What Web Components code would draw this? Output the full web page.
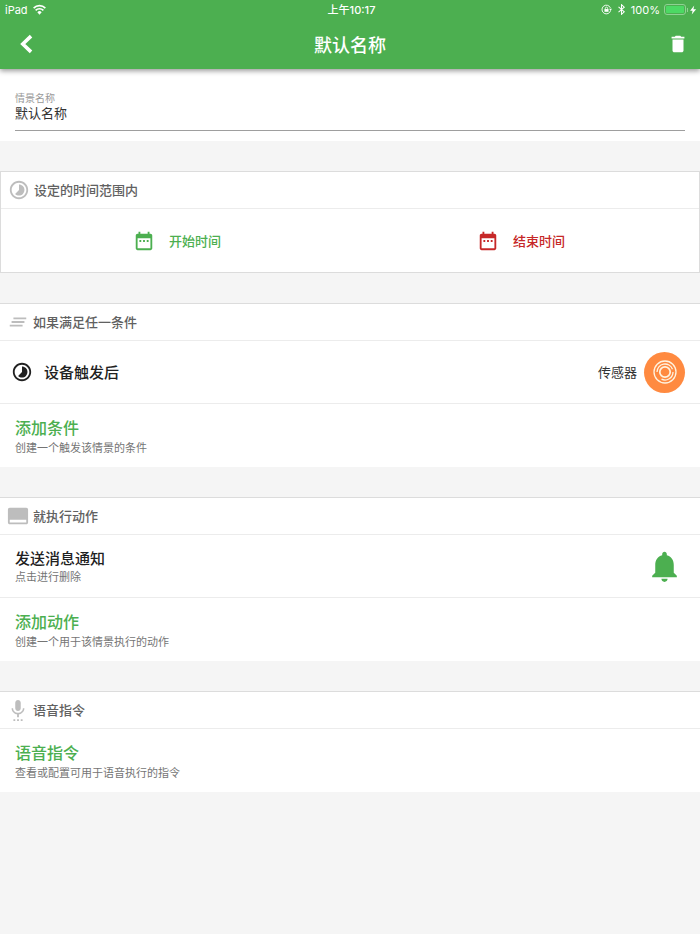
<!DOCTYPE html>
<html lang="zh-CN">
<head>
<meta charset="utf-8">
<meta name="viewport" content="width=device-width, initial-scale=1">
<title>默认名称</title>
<style>
  html { background: #f5f5f5; }
  body {
    margin: 0;
    font-family: "Noto Sans CJK SC", sans-serif;
    font-size: 13px;
    line-height: 20px;
    color: #212121;
    --green: #4caf50;
    --red: #c62828;
    --line: #ececec;
    --edge: #dcdcdc;
    --muted: #bdbdbd;
  }
</style>
</head>
<body>
<scene-page>
  <app-header slot="header" heading="默认名称" time="上午10:17"></app-header>
  <name-field label="情景名称" value="默认名称"></name-field>

  <scene-section icon="timelapse" heading="设定的时间范围内" framed>
    <time-range>
      <time-button>开始时间</time-button>
      <time-button class="end">结束时间</time-button>
    </time-range>
  </scene-section>

  <scene-section icon="lines" heading="如果满足任一条件">
    <device-row heading="设备触发后" device="传感器"></device-row>
    <action-row accent note="创建一个触发该情景的条件">添加条件</action-row>
  </scene-section>

  <scene-section icon="panel" heading="就执行动作">
    <action-row note="点击进行删除">发送消息通知<app-icon slot="end" name="bell"></app-icon></action-row>
    <action-row accent note="创建一个用于该情景执行的动作">添加动作</action-row>
  </scene-section>

  <scene-section icon="voice" heading="语音指令">
    <action-row accent note="查看或配置可用于语音执行的指令">语音指令</action-row>
  </scene-section>
</scene-page>

<script>
const ICONS = {
  timelapse: '<path d="M16.24 7.76C15.07 6.59 13.54 6 12 6v6l-4.24 4.24c2.34 2.34 6.14 2.34 8.49 0 2.34-2.34 2.34-6.14-.01-8.48zM12 2C6.48 2 2 6.48 2 12s4.48 10 10 10 10-4.48 10-10S17.52 2 12 2zm0 18c-4.42 0-8-3.58-8-8s3.58-8 8-8 8 3.58 8 8-3.58 8-8 8z"/>',
  lines: '<path d="M5 13h14v-2H5v2zm-2 4h14v-2H3v2zM7 7v2h14V7H7z"/>',
  panel: '<path d="M21 3H3c-1.1 0-2 .9-2 2v14c0 1.1.9 2 2 2h18c1.1 0 2-.9 2-2V5c0-1.1-.9-2-2-2zm0 16H3v-3h18v3z"/>',
  voice: '<path d="M7 24h2v-2H7v2zm5-11c1.66 0 2.99-1.34 2.99-3L15 4c0-1.66-1.34-3-3-3S9 2.34 9 4v6c0 1.66 1.34 3 3 3zm-1 11h2v-2h-2v2zm4 0h2v-2h-2v2zm4-14h-1.7c0 3-2.54 5.1-5.3 5.1S6.7 13 6.7 10H5c0 3.41 2.72 6.23 6 6.72V20h2v-3.28c3.28-.49 6-3.31 6-6.72z"/>',
  calendar: '<path d="M9 11H7v2h2v-2zm4 0h-2v2h2v-2zm4 0h-2v2h2v-2zm2-7h-1V2h-2v2H8V2H6v2H5c-1.11 0-1.99.9-1.99 2L3 20c0 1.1.89 2 2 2h14c1.1 0 2-.9 2-2V6c0-1.1-.9-2-2-2zm0 16H5V9h14v11z"/>',
  bell: '<path d="M12 22c1.1 0 2-.9 2-2h-4c0 1.1.89 2 2 2zm6-6v-5c0-3.07-1.64-5.64-4.5-6.32V4c0-.83-.67-1.5-1.5-1.5s-1.5.67-1.5 1.5v.68C7.63 5.36 6 7.92 6 11v5l-2 2v1h16v-1l-2-2z"/>',
  trash: '<path d="M6 19c0 1.1.9 2 2 2h8c1.1 0 2-.9 2-2V7H6v12zM19 4h-3.5l-1-1h-5l-1 1H5v2h14V4z"/>',
  back: '<path d="M17.500 3.400 8.500 12l9 8.600" fill="none" stroke="currentColor" stroke-width="3.900"/>',
  wifi: '<path d="M12 21.5 16 17a5.6 5.6 0 0 0-8 0z"/><path d="M4.8 13.6a10.2 10.2 0 0 1 14.4 0M1.2 9.4a15.3 15.3 0 0 1 21.6 0" fill="none" stroke="currentColor" stroke-width="3"/>',
  lock: '<path d="M20.5 8.5A9.5 9.5 0 1 0 21 14" fill="none" stroke="currentColor" stroke-width="2"/><path d="M17.5 10.5H24l-3 4z"/><path d="M7.5 11h9v6h-9z"/><path d="M9.5 11V9.3a2.5 2.5 0 0 1 5 0V11" fill="none" stroke="currentColor" stroke-width="1.8"/>',
  bluetooth: '<path d="M5.5 6.5 18 17l-6 5.5v-21L18 7 5.5 17.5" fill="none" stroke="currentColor" stroke-width="2.2"/>',
  bolt: '<path d="M15 1 5 13.5h6L9 23l10.5-13H13z"/>',
  sensor: '<g fill="none" stroke="currentColor" stroke-width="1.3"><circle cx="12" cy="12" r="11"/><path d="M4 12a8 8 0 0 1 15.5-2.8M20 12a8 8 0 0 1-11.5 7.2"/><circle cx="12" cy="12" r="5.2" stroke-width="1.7"/></g>'
};

function define(name, html, setup) {
  const template = document.createElement('template');
  template.innerHTML = '<style>*{box-sizing:border-box}button{font:inherit;color:inherit;background:none;border:0;margin:0;padding:0;text-align:left;cursor:pointer}</style>' + html;
  customElements.define(name, class extends HTMLElement {
    constructor() {
      super();
      this.attachShadow({ mode: 'open' }).append(template.content.cloneNode(true));
    }
    connectedCallback() {
      this.shadowRoot.querySelectorAll('[data-text]').forEach(el => {
        el.textContent = this.getAttribute(el.dataset.text);
      });
      if (setup) setup(this, this.shadowRoot);
    }
  });
}

define('app-icon', `
  <style>
    :host { display: block; flex: none; width: 22px; height: 22px; }
    svg { display: block; width: 100%; height: 100%; fill: currentColor; }
  </style>
  <svg viewBox="0 0 24 24" aria-hidden="true"></svg>`,
  (host, root) => { root.querySelector('svg').innerHTML = ICONS[host.getAttribute('name')]; });

define('battery-level', `
  <style>
    :host { display: flex; align-items: center; gap: 1px; }
    .case { width: 22px; height: 11px; padding: 1px; border: 1px solid #8fd193; border-radius: 3px; }
    .fill { height: 100%; background: #4cd964; border-radius: 1px; }
    .tip { width: 1px; height: 4px; background: #8fd193; }
  </style>
  <div class="case"><div class="fill"></div></div><div class="tip"></div>`);

define('app-header', `
  <style>
    :host { display: block; position: relative; background: var(--green); color: #fff; box-shadow: 0 2px 5px rgba(0,0,0,.4); }
    .status, nav { display: grid; grid-template-columns: 1fr auto 1fr; align-items: center; }
    .status { height: 20px; padding: 0 2px 1px 5px; font-family: Inter, "Noto Sans CJK SC", sans-serif; font-size: 11px; line-height: 18px; }
    .left, .right { display: flex; align-items: center; }
    .left { gap: 5px; }
    .right { justify-content: flex-end; }
    .right span { margin: 0 4px; }
    .time { font-weight: 500; }
    .status app-icon { width: 11px; height: 11px; }
    .status app-icon[name=wifi] { width: 13px; height: 13px; }
    .status app-icon[name=bolt] { width: 10px; height: 10px; }
    .status app-icon[name=bluetooth] { margin-left: 4px; }
    nav { height: 49px; padding: 0 11px 2px; }
    h1 { margin: 0; font-size: 18px; line-height: 26px; font-weight: 500; }
    .back { justify-self: start; margin-left: 4px; }
    .del { justify-self: end; }
  </style>
  <div class="status">
    <div class="left"><span>iPad</span><app-icon name="wifi"></app-icon></div>
    <div class="time" data-text="time"></div>
    <div class="right">
      <app-icon name="lock"></app-icon><app-icon name="bluetooth"></app-icon><span>100%</span>
      <battery-level></battery-level><app-icon name="bolt"></app-icon>
    </div>
  </div>
  <nav>
    <button class="back" aria-label="返回"><app-icon name="back"></app-icon></button>
    <h1 data-text="heading"></h1>
    <button class="del" aria-label="删除"><app-icon name="trash"></app-icon></button>
  </nav>`);

define('name-field', `
  <style>
    :host { display: block; background: #fff; padding: 22px 15px 10px; }
    label { display: block; font-size: 10px; line-height: 14px; color: #999; }
    input { display: block; width: 100%; height: 26px; padding: 0 0 10px; border: 0; border-bottom: 1px solid #9e9e9e; border-radius: 0; background: none; outline: 0; font: inherit; line-height: 15px; color: #333; }
  </style>
  <label for="name" data-text="label"></label>
  <input id="name" type="text">`,
  (host, root) => { root.querySelector('input').value = host.getAttribute('value'); });

define('scene-section', `
  <style>
    :host { display: block; background: #fff; border-top: 1px solid var(--edge); }
    :host([framed]) { border: 1px solid var(--edge); }
    header { display: flex; align-items: center; gap: 4px; height: 36px; padding: 0 7px; color: var(--muted); }
    h2 { margin: 0; font-size: 13px; line-height: 20px; font-weight: 500; color: #616161; }
    ::slotted(*) { border-top: 1px solid var(--line); }
  </style>
  <header><app-icon></app-icon><h2 data-text="heading"></h2></header>
  <slot></slot>`,
  (host, root) => {
    const icon = document.createElement('app-icon');
    icon.setAttribute('name', host.getAttribute('icon'));
    root.querySelector('app-icon').replaceWith(icon);
  });

define('time-range', `
  <style>
    :host { display: grid; grid-template-columns: 1fr 1fr; min-height: 63px; padding: 0 6px 0 4px; }
  </style>
  <slot></slot>`);

define('time-button', `
  <style>
    :host { display: flex; justify-content: center; color: var(--green); font-weight: 500; }
    :host(.end) { color: var(--red); }
    button { display: flex; align-items: center; gap: 14px; }
  </style>
  <button><app-icon name="calendar"></app-icon><slot></slot></button>`);

define('device-row', `
  <style>
    :host { display: block; }
    button { display: flex; align-items: center; width: 100%; min-height: 62px; padding: 0 15px 0 11px; }
    .title { flex: 1; margin-left: 11px; font-size: 15px; font-weight: 500; }
    .device { color: #333; }
    .badge { display: grid; place-items: center; width: 41px; height: 41px; margin-left: 7px; border-radius: 50%; background: #ff8a40; color: #fff3e0; }
    .badge app-icon { width: 24px; height: 24px; }
  </style>
  <button>
    <app-icon name="timelapse"></app-icon>
    <span class="title" data-text="heading"></span>
    <span class="device" data-text="device"></span>
    <span class="badge"><app-icon name="sensor"></app-icon></span>
  </button>`);

define('action-row', `
  <style>
    :host { display: block; }
    button { display: flex; align-items: center; width: 100%; min-height: 62px; padding: 0 15px; }
    .text { flex: 1; }
    .title { display: block; font-size: 15px; line-height: 20px; font-weight: 500; }
    .note { display: block; font-size: 11px; line-height: 16px; color: #757575; }
    :host([accent]) button { min-height: 63px; padding-bottom: 2px; }
    :host([accent]) .title { font-size: 16px; line-height: 24px; color: var(--green); }
    ::slotted(app-icon) { width: 37px; height: 37px; margin-right: 2px; color: var(--green); }
  </style>
  <button>
    <span class="text"><span class="title"><slot></slot></span><span class="note" data-text="note"></span></span>
    <slot name="end"></slot>
  </button>`);

define('scene-page', `
  <style>
    :host { display: block; min-height: 100vh; background: #f5f5f5; }
    main { display: flex; flex-direction: column; gap: 30px; }
  </style>
  <slot name="header"></slot>
  <main><slot></slot></main>`);
</script>
</body>
</html>
